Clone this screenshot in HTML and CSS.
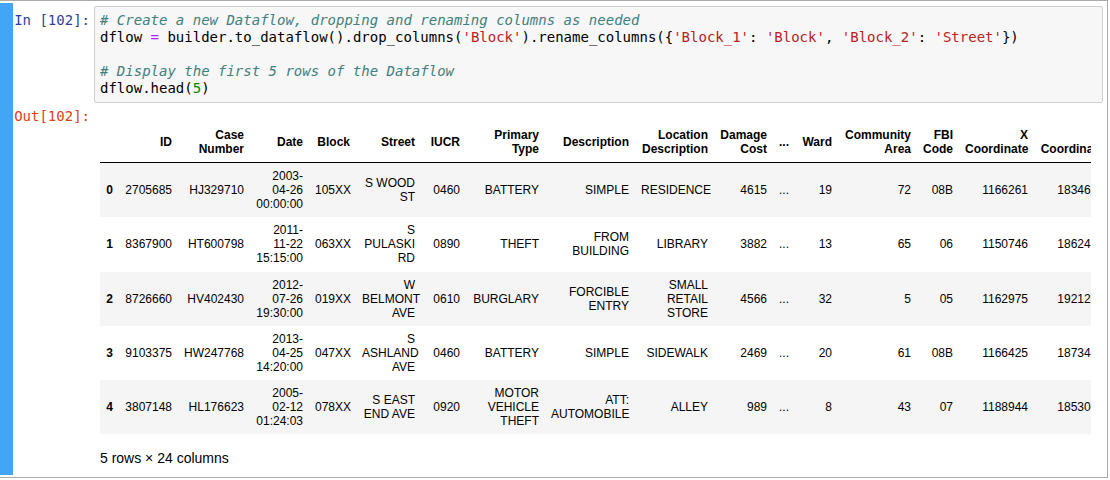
FILE: index.html
```html
<!DOCTYPE html>
<html>
<head>
<meta charset="utf-8">
<link rel="stylesheet" href="styles.css">
</head>
<body>
<div class="cell">
  <div class="input">
    <div class="prompt in-prompt">In&nbsp;[102]:</div>
    <pre class="code"><span class="c"># Create a new Dataflow, dropping and renaming columns as needed</span>
dflow <span class="o">=</span> builder.to_dataflow().drop_columns(<span class="s">'Block'</span>).rename_columns({<span class="s">'Block_1'</span>: <span class="s">'Block'</span>, <span class="s">'Block_2'</span>: <span class="s">'Street'</span>})

<span class="c"># Display the first 5 rows of the Dataflow</span>
dflow.head(<span class="n">5</span>)</pre>
  </div>
  <div class="output">
    <div class="prompt out-prompt">Out[102]:</div>
    <div class="subarea">
      <table class="dataframe">
        <colgroup>
          <col class="w-idx"><col class="w-id"><col class="w-case"><col class="w-date"><col class="w-block"><col class="w-street"><col class="w-iucr"><col class="w-ptype"><col class="w-desc"><col class="w-loc"><col class="w-dmg"><col class="w-ell"><col class="w-ward"><col class="w-comm"><col class="w-fbi"><col class="w-x"><col class="w-y">
        </colgroup>
        <thead>
          <tr>
            <th></th><th>ID</th><th>Case<br>Number</th><th>Date</th><th>Block</th><th>Street</th><th>IUCR</th><th>Primary<br>Type</th><th>Description</th><th>Location<br>Description</th><th>Damage<br>Cost</th><th>...</th><th>Ward</th><th>Community<br>Area</th><th>FBI<br>Code</th><th>X<br>Coordinate</th><th>Y<br>Coordinate</th>
          </tr>
        </thead>
        <tbody>
          <tr>
            <th>0</th><td>2705685</td><td>HJ329710</td><td>2003-<br>04-26<br>00:00:00</td><td>105XX</td><td>S WOOD<br>ST</td><td>0460</td><td>BATTERY</td><td>SIMPLE</td><td>RESIDENCE</td><td>4615</td><td>...</td><td>19</td><td>72</td><td>08B</td><td>1166261</td><td>1834660</td>
          </tr>
          <tr>
            <th>1</th><td>8367900</td><td>HT600798</td><td>2011-<br>11-22<br>15:15:00</td><td>063XX</td><td>S<br>PULASKI<br>RD</td><td>0890</td><td>THEFT</td><td>FROM<br>BUILDING</td><td>LIBRARY</td><td>3882</td><td>...</td><td>13</td><td>65</td><td>06</td><td>1150746</td><td>1862471</td>
          </tr>
          <tr>
            <th>2</th><td>8726660</td><td>HV402430</td><td>2012-<br>07-26<br>19:30:00</td><td>019XX</td><td>W<br>BELMONT<br>AVE</td><td>0610</td><td>BURGLARY</td><td>FORCIBLE<br>ENTRY</td><td>SMALL<br>RETAIL<br>STORE</td><td>4566</td><td>...</td><td>32</td><td>5</td><td>05</td><td>1162975</td><td>1921244</td>
          </tr>
          <tr>
            <th>3</th><td>9103375</td><td>HW247768</td><td>2013-<br>04-25<br>14:20:00</td><td>047XX</td><td>S<br>ASHLAND<br>AVE</td><td>0460</td><td>BATTERY</td><td>SIMPLE</td><td>SIDEWALK</td><td>2469</td><td>...</td><td>20</td><td>61</td><td>08B</td><td>1166425</td><td>1873421</td>
          </tr>
          <tr>
            <th>4</th><td>3807148</td><td>HL176623</td><td>2005-<br>02-12<br>01:24:03</td><td>078XX</td><td>S EAST<br>END AVE</td><td>0920</td><td>MOTOR<br>VEHICLE<br>THEFT</td><td>ATT:<br>AUTOMOBILE</td><td>ALLEY</td><td>989</td><td>...</td><td>8</td><td>43</td><td>07</td><td>1188944</td><td>1853045</td>
          </tr>
        </tbody>
      </table>
      <p class="shape">5 rows × 24 columns</p>
    </div>
  </div>
</div>
</body>
</html>
```

FILE: styles.css
```css
html, body {
  margin: 0;
  padding: 0;
  background: #ffffff;
}

body {
  font-family: "Liberation Sans", Arial, sans-serif;
  color: #000000;
}

.cell {
  width: 1090px;
  display: flex;
  flex-direction: column;
  border: 1px solid #ababab;
  border-left: none;
  padding: 5px 4px 0 13px;
  background: linear-gradient(#42a5f5, #42a5f5) 0 2px / 13px calc(100% - 4px) no-repeat;
}

.input,
.output {
  display: flex;
  align-items: flex-start;
}

.output {
  margin-top: 5px;
}

.prompt {
  flex: 0 0 81px;
  box-sizing: border-box;
  padding-right: 4px;
  text-align: right;
  font-family: "DejaVu Sans Mono", monospace;
  font-size: 14px;
  line-height: 17px;
  white-space: nowrap;
}

.in-prompt {
  color: #303f9f;
  padding-top: 6px;
}

.out-prompt {
  color: #d84315;
}

.code {
  flex: 1;
  min-width: 0;
  margin: 0;
  padding: 5px;
  border: 1px solid #cfcfcf;
  border-radius: 2px;
  background: #f7f7f7;
  font-family: "DejaVu Sans Mono", monospace;
  font-size: 14px;
  line-height: 17px;
  color: #000000;
  white-space: pre;
  overflow: hidden;
}

.code .c {
  color: #408080;
  font-style: italic;
}

.code .o {
  color: #aa22ff;
}

.code .s {
  color: #ba2121;
}

.code .n {
  color: #008800;
}

.subarea {
  flex: 1;
  min-width: 0;
  overflow: hidden;
  margin-right: 12px;
  padding: 14px 0 9px 6px;
}

.dataframe {
  table-layout: fixed;
  width: 1010px;
  border-collapse: separate;
  border-spacing: 0;
  font-size: 12px;
  line-height: 14.07px;
  color: #000000;
}

.dataframe th,
.dataframe td {
  padding: 6px;
  text-align: right;
  vertical-align: middle;
  white-space: nowrap;
  overflow: visible;
}

.dataframe th {
  font-weight: bold;
}

.dataframe thead th {
  border-bottom: 1px solid #000000;
}

.dataframe tbody tr:nth-child(odd) {
  background: #f5f5f5;
}

.w-idx { width: 19px; }
.w-id { width: 59px; }
.w-case { width: 72px; }
.w-date { width: 59px; }
.w-block { width: 47px; }
.w-street { width: 65px; }
.w-iucr { width: 45px; }
.w-ptype { width: 79px; }
.w-desc { width: 90px; }
.w-loc { width: 79px; }
.w-dmg { width: 59px; }
.w-ell { width: 22px; }
.w-ward { width: 43px; }
.w-comm { width: 79px; }
.w-fbi { width: 42px; }
.w-x { width: 75px; }
.w-y { width: 76px; }

.shape {
  margin: 14px 0 0;
  font-size: 14px;
  line-height: 20px;
}
```
